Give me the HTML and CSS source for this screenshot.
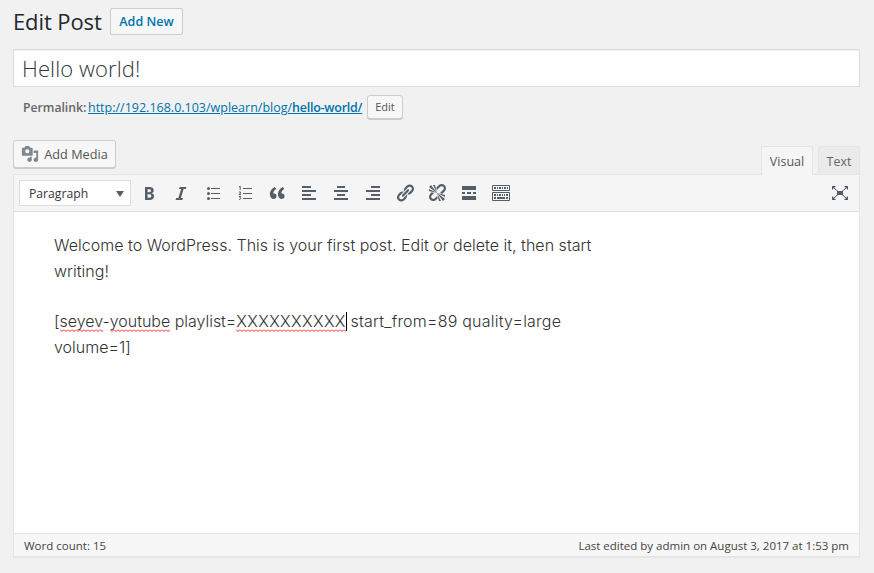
FILE: index.html
```
<!DOCTYPE html>
<html lang="en">
<head>
<meta charset="utf-8">
<title>Edit Post</title>
<link rel="stylesheet" href="styles.css">
</head>
<body>
<header class="heading"><h1>Edit Post</h1><a class="add-new">Add New</a></header>
<div class="title-field">Hello world!</div>
<div class="permalink"><strong>Permalink:</strong><a class="url">http://192.168.0.103/wplearn/blog/<b>hello-world/</b></a><button class="edit">Edit</button></div>
<div class="tools">
<button class="media"><svg width="18" height="18" viewBox="0 0 20 20"><path d="M13 11V4c0-.55-.45-1-1-1h-1.67L9 1H5L3.67 3H2c-.55 0-1 .45-1 1v7c0 .55.45 1 1 1h10c.55 0 1-.45 1-1zM7 4.700c1.300 0 2.300 1 2.300 2.300S8.300 9.300 7 9.300 4.700 8.300 4.700 7 5.700 4.700 7 4.700zM14 6h5v10.500c0 1.380-1.120 2.500-2.500 2.500S14 17.880 14 16.500s1.120-2.500 2.500-2.500c.17 0 .34.02.5.05V9h-3V6zm-4 8.050V13h2v3.500c0 1.380-1.120 2.500-2.500 2.500S7 17.880 7 16.500 8.120 14 9.500 14c.17 0 .34.02.5.05z"/></svg><span>Add Media</span></button>
<div class="tabs"><div class="tab active">Visual</div><div class="tab">Text</div></div>
</div>
<main class="editor">
<div class="toolbar">
<div class="format"><span>Paragraph</span><i class="caret"></i></div>
<div class="icons">
<svg viewBox="0 0 20 20"><path d="M6 4v13h4.54c1.37 0 2.46-.33 3.26-1 .8-.66 1.2-1.58 1.2-2.77 0-.84-.17-1.51-.51-2.01s-.9-.85-1.67-1.03v-.09c.57-.1 1.02-.4 1.36-.9s.51-1.13.51-1.91c0-1.14-.39-1.98-1.17-2.5C12.75 4.26 11.5 4 9.78 4H6zm2.57 5.15V6.26h1.36c.73 0 1.27.11 1.61.32.34.22.51.58.51 1.07 0 .54-.16.92-.47 1.15s-.82.35-1.51.35h-1.5zm0 2.19h1.6c1.44 0 2.16.53 2.16 1.61 0 .6-.17 1.05-.51 1.34s-.86.43-1.57.43H8.57v-3.38z"/></svg>
<svg viewBox="0 0 20 20"><path d="M14.78 6h-2.13l-2.8 9h2.12l-.62 2H4.6l.62-2h2.14l2.8-9H8.03l.62-2h6.75z"/></svg>
<svg viewBox="0 0 20 20"><circle cx="5.5" cy="5.5" r="1.5"/><circle cx="5.5" cy="10.5" r="1.5"/><circle cx="5.5" cy="15.5" r="1.5"/><path d="M8 5h9v1H8zM8 10h9v1H8zM8 15h9v1H8z"/></svg>
<svg viewBox="0 0 20 20"><path d="M8 5h9v1H8zM8 10h9v1H8zM8 15h9v1H8z"/><path class="line" d="M4 4l1.2-.8V7M4 9h1.6v1L4 11.6h2M4 13.5h1.7L4.8 15c1.4 0 1.2 1.6-.8 1.5"/></svg>
<svg viewBox="0 0 20 20"><path d="M9.49 13.22c0-.74-.2-1.38-.61-1.9-.62-.78-1.83-.88-2.53-.72-.29-1.65 1.11-3.75 2.92-4.65L7.88 4c-2.73 1.3-5.42 4.28-4.96 8.05C3.21 14.43 4.59 16 6.54 16c.85 0 1.56-.25 2.12-.75s.83-1.18.83-2.03zm8.05 0c0-.74-.2-1.38-.61-1.9-.63-.78-1.83-.88-2.53-.72-.29-1.65 1.11-3.75 2.92-4.65L15.93 4c-2.73 1.3-5.41 4.28-4.95 8.05.29 2.38 1.66 3.95 3.61 3.95.85 0 1.56-.25 2.12-.75s.83-1.18.83-2.03z"/></svg>
<svg viewBox="0 0 20 20"><path d="M12 5V3H3v2h9zm5 4V7H3v2h14zm-5 4v-2H3v2h9zm5 4v-2H3v2h14z"/></svg>
<svg viewBox="0 0 20 20"><path d="M14 5V3H6v2h8zm3 4V7H3v2h14zm-3 4v-2H6v2h8zm3 4v-2H3v2h14z"/></svg>
<svg viewBox="0 0 20 20"><path d="M17 5V3H8v2h9zm0 4V7H3v2h14zm0 4v-2H8v2h9zm0 4v-2H3v2h14z"/></svg>
<svg viewBox="0 0 20 20"><path d="M17.74 2.76c1.68 1.69 1.68 4.41 0 6.1l-1.53 1.52c-1.12 1.12-2.7 1.47-4.14 1.09l2.62-2.61.76-.77.76-.76c.84-.84.84-2.2 0-3.04-.84-.85-2.2-.85-3.04 0l-.77.76-3.38 3.38c-.37-1.44-.02-3.02 1.1-4.14l1.52-1.53c1.69-1.68 4.42-1.68 6.1 0zM8.59 13.43l5.34-5.34c.42-.42.42-1.1 0-1.52-.44-.43-1.13-.39-1.53 0l-5.33 5.34c-.42.42-.42 1.1 0 1.52.44.43 1.13.39 1.52 0zm-.76 2.29l4.14-4.15c.38 1.44.03 3.02-1.09 4.14l-1.52 1.53c-1.69 1.68-4.41 1.68-6.1 0-1.68-1.68-1.68-4.42 0-6.1l1.53-1.52c1.12-1.12 2.7-1.47 4.14-1.1l-4.14 4.15c-.85.84-.85 2.2 0 3.05.84.84 2.2.84 3.04 0z"/></svg>
<svg viewBox="0 0 20 20"><path d="M17.74 2.26c1.68 1.69 1.68 4.41 0 6.1l-1.53 1.52c-.32.33-.69.58-1.08.77L13 10l1.69-1.64.76-.77.76-.76c.84-.84.84-2.2 0-3.04-.84-.85-2.2-.85-3.04 0l-.77.76-.76.76L10 7l-.65-2.14c.19-.38.44-.75.77-1.07l1.52-1.53c1.69-1.68 4.42-1.68 6.1 0zM2 4l8 6-6-8zm4-2l4 8-2-8H6zM2 6l8 4-8-2V6zm7.36 7.69L10 13l.74 2.35-1.38 1.39c-1.69 1.68-4.41 1.68-6.1 0-1.68-1.68-1.68-4.42 0-6.1l1.39-1.38L7 10l-.69.64-1.52 1.53c-.85.84-.85 2.2 0 3.04.84.85 2.2.85 3.04 0zM18 16l-8-6 6 8zm-4 2l-4-8 2 8h2zm4-4l-8-4 8 2v2z"/></svg>
<svg viewBox="0 0 20 20"><path d="M17 7V3H3v4h14zM6 11V9H3v2h3zm6 0V9H8v2h4zm5 0V9h-3v2h3zm0 6v-4H3v4h14z"/></svg>
<svg viewBox="0 0 20 20"><path class="line" d="M1.5 2.5h17v5h-17zM1.5 9.5h17v8h-17z"/><path d="M3 4h2v2H3zM6 4h1v2H6zM8 4h2v2H8zM11 4h1v2h-1zM13 4h2v2h-2zM16 4h1v2h-1zM3 11h2v2H3zM6 11h1v2H6zM8 11h2v2H8zM11 11h1v2h-1zM13 11h1v2h-1zM15 11h2v2h-2zM3 14h2v2H3zM6 14h8v2H6zM15 14h2v2h-2z"/></svg>
</div>
<svg class="expand" viewBox="0 0 20 20"><path d="M7 8h6v4H7zM2 3h4L2 7zM18 3v4l-4-4zM2 17v-4l4 4zM18 17h-4l4-4z"/><path class="line" d="M3 4l5 4.500M17 4l-5 4.500M3 16l5-4.500M17 16l-5-4.500"/></svg>
</div>
<article class="content">
<p>Welcome to WordPress. This is your first post. Edit or delete it, then start<br>writing!</p>
<p><span class="code">[<u>seyev</u>-<u>youtube</u> playlist=</span><u class="value">XXXXXXXXXX</u><i class="cursor"></i><span class="options"> start_from=89 quality=large</span><br>volume=1]</p>
</article>
<footer class="status"><span>Word count: 15</span><span>Last edited by admin on August 3, 2017 at 1:53 pm</span></footer>
</main>
</body>
</html>
```
FILE: styles.css
```
* { box-sizing: border-box; }
body { margin: 0; padding: 8px 14px 0 13px; height: 573px; overflow: hidden; background: #f1f1f1; color: #444; font: 13px/18px "Open Sans", sans-serif; }
span, b, strong, a { white-space: nowrap; }
button { font: inherit; color: #555; background: #f7f7f7; border: 1px solid #ccc; border-radius: 3px; box-shadow: 0 1px 0 #ccc; padding: 0; display: flex; align-items: center; justify-content: center; }
.heading { display: flex; height: 27px; align-items: center; }
h1 { margin: 0; width: 97px; font-size: 22px; line-height: 27px; font-weight: 400; letter-spacing: -.1px; color: #23282d; }
.add-new { width: 73px; height: 27px; border: 1px solid #ccc; border-radius: 2px; background: #f7f7f7; color: #0073aa; font-size: 12.5px; font-weight: 600; display: flex; align-items: center; justify-content: center; }
.title-field { margin-top: 14px; height: 38px; padding-left: 8px; border: 1px solid #ddd; background: #fff; box-shadow: inset 0 1px 2px rgba(0,0,0,.07); color: #32373c; font-size: 22px; line-height: 36px; font-weight: 300; letter-spacing: .1px; }
.permalink { display: flex; align-items: center; height: 24px; margin-top: 8px; padding-left: 10px; color: #666; font-size: 12.5px; }
.permalink strong { width: 65px; padding-top: 1px; font-size: 12.2px; font-weight: 600; }
.url { width: 279px; padding-top: 1px; color: #0073aa; text-decoration: underline; }
.url b { font-weight: 600; letter-spacing: -.25px; }
.edit { width: 36px; height: 24px; font-size: 11px; }
.tools { display: flex; justify-content: space-between; margin-top: 20px; height: 35px; }
.media { width: 103px; height: 28px; margin-top: 1px; gap: 5px; font-size: 12.7px; }
.media svg { fill: #82878c; }
.tabs { display: flex; gap: 5px; align-items: flex-end; position: relative; z-index: 1; }
.tab { height: 28px; width: 42px; border: 1px solid #e5e5e5; border-bottom: 0; background: #ebebeb; color: #666; text-align: center; font-size: 12.5px; line-height: 29px; }
.tab.active { width: 52px; height: 29px; margin-bottom: -1px; background: #f5f5f5; color: #555; }
.editor { height: 383px; border: 1px solid #e5e5e5; background: #fff; display: flex; flex-direction: column; box-shadow: 0 1px 1px rgba(0,0,0,.04); }
.toolbar { height: 37px; flex: none; border-bottom: 1px solid #ddd; background: #f5f5f5; display: flex; align-items: center; padding: 0 9px 0 5px; }
.format { width: 112px; height: 26px; border: 1px solid #ddd; background: #fff; display: flex; align-items: center; justify-content: space-between; padding: 1px 6px 0 9px; color: #32373c; font-size: 12.2px; }
.caret { border: 4px solid transparent; border-top: 6px solid #555d66; border-bottom: 0; }
.icons { display: flex; gap: 12px; margin-left: 8px; }
.toolbar svg { width: 20px; height: 20px; fill: #555d66; }
.toolbar .line { fill: none; stroke: #555d66; stroke-width: 1; }
.toolbar .expand { margin-left: auto; }
.content { flex: 1; padding: 20px 40px 0; font: 300 16px/26px Inter, sans-serif; letter-spacing: .02px; color: #333; }
.content p { margin: 0 0 24px; }
.code { letter-spacing: -.02px; }
.value { letter-spacing: .36px; }
.options { letter-spacing: .22px; }
u { text-decoration: none; padding-bottom: 1px; background: url("data:image/svg+xml,%3Csvg xmlns='http://www.w3.org/2000/svg' width='4' height='3'%3E%3Cpath d='M0 .5L2 2.500L4 .5' fill='none' stroke='%23f02020'/%3E%3C/svg%3E") left bottom repeat-x; }
.cursor { display: inline-block; width: 1px; height: 19px; margin-right: -1px; background: #000; vertical-align: -4px; }
.status { height: 23px; border-top: 1px solid #e5e5e5; background: #f7f7f7; display: flex; justify-content: space-between; align-items: center; padding: 2px 10px 0; font-size: 11.5px; }
```
